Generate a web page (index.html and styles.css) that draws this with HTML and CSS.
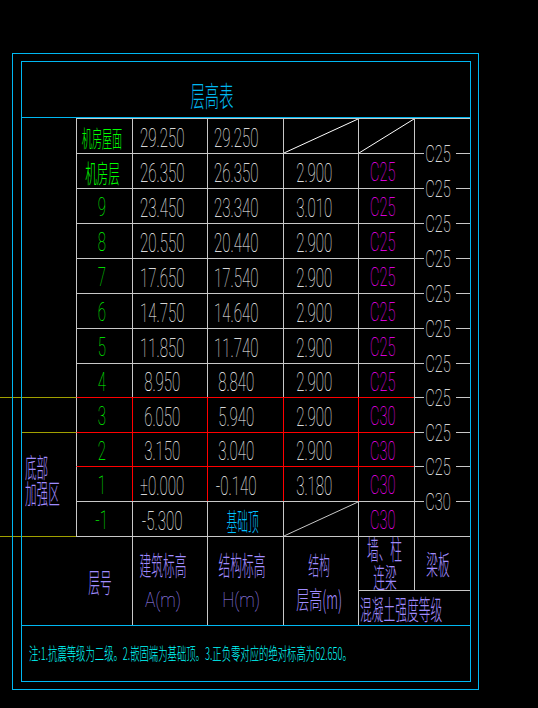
FILE: index.html
```html
<!DOCTYPE html>
<html lang="zh">
<head>
<meta charset="utf-8">
<title>层高表</title>
<link rel="stylesheet" href="styles.css">
</head>
<body>
<div class="outer">
  <div class="inner">
    <div class="title"><span class="s cn ttl">层高表</span></div>
    <div class="grid">
      <div class="side side-top"></div>
      <div class="side side-mid"></div>
      <div class="side side-zone"><span class="s cn zone">底部<br>加强区</span></div>

      <div class="cell fl"><span class="s cn g4">机房屋面</span></div>
      <div class="cell a"><span class="s num">29.250</span></div>
      <div class="cell h"><span class="s num">29.250</span></div>
      <div class="cell diag"><svg viewBox="0 0 100 100" preserveAspectRatio="none"><line x1="0" y1="100" x2="100" y2="0" stroke="#ffffff" stroke-width="1" vector-effect="non-scaling-stroke"/></svg></div>
      <div class="cell diag"><svg viewBox="0 0 100 100" preserveAspectRatio="none"><line x1="0" y1="100" x2="100" y2="0" stroke="#ffffff" stroke-width="1" vector-effect="non-scaling-stroke"/></svg></div>

      <div class="cell fl"><span class="s cn g3">机房层</span></div>
      <div class="cell a"><span class="s num">26.350</span></div>
      <div class="cell h"><span class="s num">26.350</span></div>
      <div class="cell d"><span class="s num">2.900</span></div>
      <div class="cell m"><span class="s mg">C25</span></div>

      <div class="cell fl"><span class="s fn">9</span></div>
      <div class="cell a"><span class="s num">23.450</span></div>
      <div class="cell h"><span class="s num">23.340</span></div>
      <div class="cell d"><span class="s num">3.010</span></div>
      <div class="cell m"><span class="s mg">C25</span></div>

      <div class="cell fl"><span class="s fn">8</span></div>
      <div class="cell a"><span class="s num">20.550</span></div>
      <div class="cell h"><span class="s num">20.440</span></div>
      <div class="cell d"><span class="s num">2.900</span></div>
      <div class="cell m"><span class="s mg">C25</span></div>

      <div class="cell fl"><span class="s fn">7</span></div>
      <div class="cell a"><span class="s num">17.650</span></div>
      <div class="cell h"><span class="s num">17.540</span></div>
      <div class="cell d"><span class="s num">2.900</span></div>
      <div class="cell m"><span class="s mg">C25</span></div>

      <div class="cell fl"><span class="s fn">6</span></div>
      <div class="cell a"><span class="s num">14.750</span></div>
      <div class="cell h"><span class="s num">14.640</span></div>
      <div class="cell d"><span class="s num">2.900</span></div>
      <div class="cell m"><span class="s mg">C25</span></div>

      <div class="cell fl"><span class="s fn">5</span></div>
      <div class="cell a"><span class="s num">11.850</span></div>
      <div class="cell h"><span class="s num">11.740</span></div>
      <div class="cell d"><span class="s num">2.900</span></div>
      <div class="cell m"><span class="s mg">C25</span></div>

      <div class="cell fl"><span class="s fn">4</span></div>
      <div class="cell a"><span class="s num">8.950</span></div>
      <div class="cell h"><span class="s num">8.840</span></div>
      <div class="cell d"><span class="s num">2.900</span></div>
      <div class="cell m"><span class="s mg">C25</span></div>

      <div class="cell fl rt"><span class="s fn">3</span></div>
      <div class="cell a rt rl"><span class="s num">6.050</span></div>
      <div class="cell h rt rl"><span class="s num">5.940</span></div>
      <div class="cell d rt rl"><span class="s num">2.900</span></div>
      <div class="cell m rt rl"><span class="s mg">C30</span></div>

      <div class="cell fl rt"><span class="s fn">2</span></div>
      <div class="cell a rt rl"><span class="s num">3.150</span></div>
      <div class="cell h rt rl"><span class="s num">3.040</span></div>
      <div class="cell d rt rl"><span class="s num">2.900</span></div>
      <div class="cell m rt rl"><span class="s mg">C30</span></div>

      <div class="cell fl rt"><span class="s fn">1</span></div>
      <div class="cell a rt rl"><span class="s num">±0.000</span></div>
      <div class="cell h rt rl"><span class="s num">-0.140</span></div>
      <div class="cell d rt rl"><span class="s num">3.180</span></div>
      <div class="cell m rt rl"><span class="s mg">C30</span></div>

      <div class="cell fl"><span class="s fn">-1</span></div>
      <div class="cell a"><span class="s num">-5.300</span></div>
      <div class="cell h base"><span class="s cn jc">基础顶</span></div>
      <div class="cell diag"><svg viewBox="0 0 100 100" preserveAspectRatio="none"><line x1="0" y1="100" x2="100" y2="0" stroke="#c8c8c8" stroke-width="1" vector-effect="non-scaling-stroke"/></svg></div>
      <div class="cell m"><span class="s mg">C30</span></div>

      <div class="clabels">
        <div class="cl"><span class="lab"><span class="s wl">C25</span></span></div>
        <div class="cl"><span class="lab"><span class="s wl">C25</span></span></div>
        <div class="cl"><span class="lab"><span class="s wl">C25</span></span></div>
        <div class="cl"><span class="lab"><span class="s wl">C25</span></span></div>
        <div class="cl"><span class="lab"><span class="s wl">C25</span></span></div>
        <div class="cl"><span class="lab"><span class="s wl">C25</span></span></div>
        <div class="cl"><span class="lab"><span class="s wl">C25</span></span></div>
        <div class="cl"><span class="lab"><span class="s wl">C25</span></span></div>
        <div class="cl"><span class="lab"><span class="s wl">C25</span></span></div>
        <div class="cl"><span class="lab"><span class="s wl">C25</span></span></div>
        <div class="cl"><span class="lab"><span class="s wl">C30</span></span></div>
      </div>

      <div class="hd h-no"><span class="s cn hc">层号</span></div>
      <div class="hd h-a"><span class="s cn hc">建筑标高</span><span class="s lat">A(m)</span></div>
      <div class="hd h-h"><span class="s cn hc">结构标高</span><span class="s lat">H(m)</span></div>
      <div class="hd h-d"><span class="s cn hc">结构</span><span class="s cn hc lh2">层高(m)</span></div>
      <div class="hd h-w"><span class="s cn hc w1">墙、柱</span><span class="s cn hc w2">连梁</span></div>
      <div class="hd h-b"><span class="s cn hc">梁板</span></div>
      <div class="hd h-g"><span class="s cn hc">混凝土强度等级</span></div>
    </div>
    <div class="note"><span class="s cn nt">注:1.抗震等级为二级。2.嵌固端为基础顶。3.正负零对应的绝对标高为62.650。</span></div>
  </div>
</div>
<div class="yline y1"></div>
<div class="yline y2"></div>
</body>
</html>
```

FILE: styles.css
```css
* { box-sizing: border-box; margin: 0; padding: 0; }
html, body { background: #000; }
body {
  width: 538px;
  height: 708px;
  overflow: hidden;
  position: relative;
  font-family: Roboto, "Liberation Sans", sans-serif;
  color: #fff;
}

.outer {
  margin: 53px 0 0 12px;
  width: 467px;
  height: 637px;
  border: 1px solid #00b8f2;
  padding: 7px 0 0 8px;
}
.inner {
  width: 450px;
  height: 621px;
  border: 1px solid #00b8f2;
  display: flex;
  flex-direction: column;
}

.title {
  height: 56px;
  flex: none;
  border-bottom: 1px solid #00b8f2;
  display: flex;
  align-items: center;
  justify-content: center;
  padding: 11px 68px 0 0;
}

/* scaled CAD-like text */
.s {
  display: inline-block;
  white-space: nowrap;
  line-height: 1;
  transform: scaleX(var(--sx, 1));
}
.cn { font-family: "Noto Sans CJK SC", sans-serif; font-weight: 300; }

.ttl { color: #00b8f2; font-size: 28px; --sx: 0.51; }

.grid {
  display: grid;
  grid-template-columns: 54px 56px 75px 76px 75px 56px 56px;
  grid-template-rows: 35px 35px 35px 35px 35px 35px 35px 34px 35px 34px 35px 35px 54px 35px;
  height: 507px;
  flex: none;
}
.grid > * { min-width: 0; min-height: 0; }

.side-top { grid-column: 1; grid-row: 1 / 9; }
.side-mid { grid-column: 1; grid-row: 9; }
.side-zone {
  grid-column: 1;
  grid-row: 10 / 13;
  border-top: 1px solid #a0a000;
  display: flex;
  align-items: center;
  padding: 0 0 10px 3px;
}
.zone {
  color: #a08cff;
  font-size: 27px;
  line-height: 26px;
  --sx: 0.43;
  transform-origin: left center;
}

.cell {
  border-top: 1px solid #c8c8c8;
  border-left: 1px solid #c8c8c8;
  display: flex;
  align-items: center;
  justify-content: center;
  padding-top: 3px;
}
.cell.rt { border-top-color: #ff0000; }
.cell.rl { border-left-color: #ff0000; }
.cell.fl { padding-right: 5px; }
.cell.a { padding-right: 15px; }
.cell.h { padding-right: 18px; }
.cell.d { padding-right: 14px; }
.cell.m { padding-right: 8px; }
.cell.base { padding-right: 6px; }
.cell.diag { padding: 0; display: block; overflow: hidden; }
.cell.diag svg { display: block; width: 100%; height: 100%; }

.num { font-size: 26px; font-weight: 100; --sx: 0.58; color: #fff; }
.fn { font-size: 25px; font-weight: 100; --sx: 0.6; color: #00ff00; }
.mg { font-size: 25px; font-weight: 100; --sx: 0.585; color: #ff00ff; }
.g4 { font-size: 23px; --sx: 0.44; color: #00ff00; }
.g3 { font-size: 25px; --sx: 0.46; color: #00ff00; }
.jc { font-size: 25px; --sx: 0.43; color: #00bfff; }

.clabels {
  grid-column: 7;
  grid-row: 1 / 13;
  border-top: 1px solid #c8c8c8;
  border-left: 1px solid #c8c8c8;
  display: flex;
  flex-direction: column;
  padding-top: 17px;
}
.cl {
  height: 35px;
  flex: none;
  display: flex;
  align-items: center;
}
.cl:nth-child(8), .cl:nth-child(10) { margin-top: -1px; }
.cl::before {
  content: "";
  width: 9px;
  height: 1px;
  background: #c8c8c8;
}
.cl::after {
  content: "";
  flex: 1;
  height: 1px;
  margin-left: 5px;
  background: #c8c8c8;
}
.lab {
  width: 27px;
  display: flex;
  justify-content: center;
}
.wl { font-size: 24px; font-weight: 100; --sx: 0.61; color: #fff; }

.hd {
  border-top: 1px solid #c8c8c8;
  border-left: 1px solid #c8c8c8;
  display: flex;
  flex-direction: column;
  align-items: center;
  justify-content: center;
  color: #a08cff;
}
.hc { font-size: 27px; --sx: 0.435; }
.lat { font-size: 21px; font-weight: 100; --sx: 0.82; margin-top: 12px; }
.h-no { grid-column: 1 / 3; grid-row: 13 / 15; border-left: none; padding-left: 46px; }
.h-a { grid-column: 3; grid-row: 13 / 15; padding: 0 15px 0 0; }
.h-h { grid-column: 4; grid-row: 13 / 15; padding: 0 8px 0 0; }
.h-d { grid-column: 5; grid-row: 13 / 15; padding: 0 4px 0 0; }
.h-d .hc { font-size: 25px; }
.h-d .lh2 { margin-top: 9px; --sx: 0.52; }
.h-w { grid-column: 6; grid-row: 13; padding: 0 4px 3px 0; }
.h-w .w2 { margin-top: 1px; }
.h-b { grid-column: 7; grid-row: 13; padding: 0 9px 0 0; }
.h-g { grid-column: 6 / 8; grid-row: 14; align-items: flex-start; padding-left: 1px; }
.h-g .hc { transform-origin: left center; }

.note {
  flex: 1;
  border-top: 1px solid #00b8f2;
  display: flex;
  align-items: center;
  padding: 0 0 2px 7px;
}
.nt {
  color: #00ffff;
  font-size: 17px;
  --sx: 0.55;
  transform-origin: left center;
}

.yline {
  position: absolute;
  left: 0;
  width: 76px;
  height: 1px;
  background: linear-gradient(to right, #a0a000 0 12px, transparent 12px 13px, #a0a000 13px 21px, transparent 21px 22px, #a0a000 22px);
}
.y1 { top: 397px; }
.y2 { top: 536px; }
```
